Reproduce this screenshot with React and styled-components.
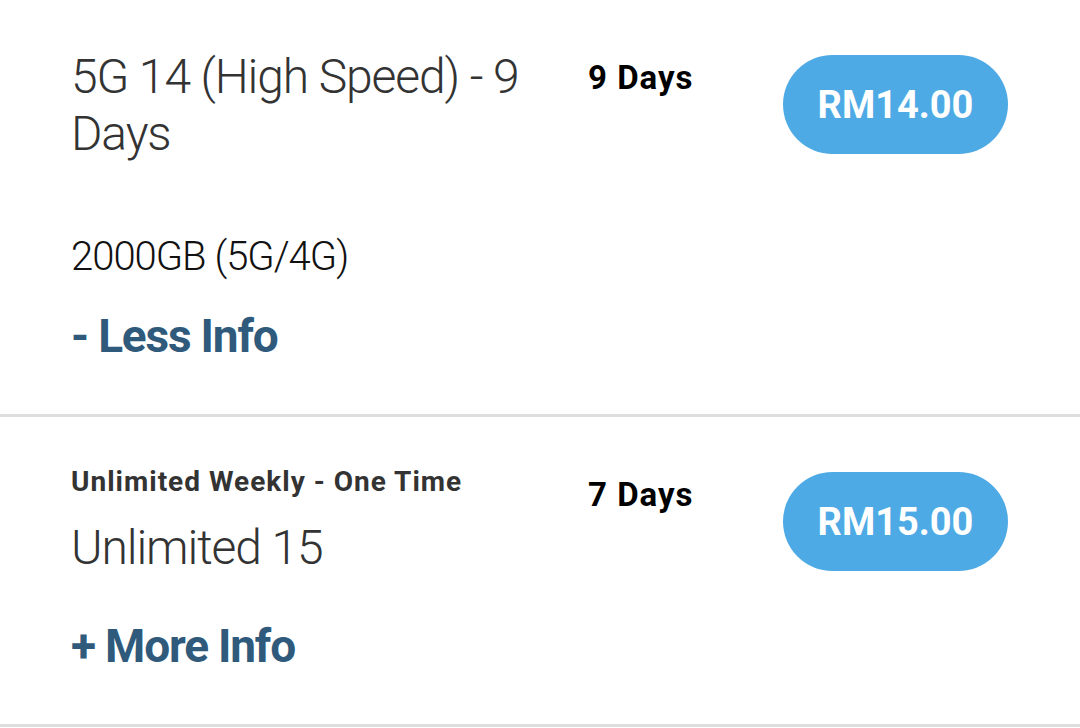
import styled, { createGlobalStyle } from "styled-components";

const plans = [
  {
    id: 1,
    title: "5G 14 (High Speed) - 9 Days",
    days: "9 Days",
    price: "RM14.00",
    details: "2000GB (5G/4G)",
    open: true,
  },
  {
    id: 2,
    tag: "Unlimited Weekly - One Time",
    title: "Unlimited 15",
    days: "7 Days",
    price: "RM15.00",
    open: false,
  },
];

export default function App() {
  return (
    <>
      <GlobalStyle />
      <List>
        {plans.map((plan) => (
          <Plan key={plan.id}>
            <Info>
              {plan.tag && <Tag>{plan.tag}</Tag>}
              <Title>{plan.title}</Title>
              {plan.open && <Details>{plan.details}</Details>}
              <Toggle $open={plan.open}>
                {plan.open ? "- Less Info" : "+ More Info"}
              </Toggle>
            </Info>
            <Duration>{plan.days}</Duration>
            <PriceButton>{plan.price}</PriceButton>
          </Plan>
        ))}
      </List>
    </>
  );
}

const GlobalStyle = createGlobalStyle`
  body {
    margin: 0;
    background: #ffffff;
    font-family: Roboto, "Liberation Sans", sans-serif;
  }
`;

const List = styled.ul`
  margin: 0;
  padding: 0;
  list-style: none;
`;

const Plan = styled.li`
  display: grid;
  grid-template-columns: 489px 167px 225px;
  column-gap: 28px;
  align-items: start;
  padding: 48px 72px 50px 71px;
  border-bottom: 3px solid #dedede;
`;

const Info = styled.div`
  display: flex;
  flex-direction: column;
`;

const Tag = styled.p`
  margin: 0 0 20px;
  font-size: 28px;
  line-height: 34px;
  font-weight: 700;
  letter-spacing: 1px;
  color: #333333;
`;

const Title = styled.h3`
  margin: 0;
  font-size: 48px;
  line-height: 57px;
  font-weight: 300;
  letter-spacing: -1.1px;
  color: #333333;
`;

const Details = styled.p`
  margin: 71px 0 0;
  font-size: 40px;
  line-height: 48px;
  font-weight: 300;
  letter-spacing: -1px;
  color: #111111;
`;

const Toggle = styled.a`
  margin-top: ${(props) => (props.$open ? "27px" : "42px")};
  font-size: 46px;
  line-height: 56px;
  font-weight: 700;
  letter-spacing: -1.2px;
  color: #2f5a7b;
  cursor: pointer;
`;

const Duration = styled.span`
  margin-top: 10px;
  font-size: 33px;
  line-height: 40px;
  font-weight: 700;
  letter-spacing: 1px;
  color: #000000;
`;

const PriceButton = styled.button`
  margin-top: 7px;
  width: 225px;
  height: 99px;
  border: none;
  border-radius: 50px;
  background: #4eaae5;
  color: #ffffff;
  font-family: Roboto, "Liberation Sans", sans-serif;
  font-size: 38px;
  font-weight: 700;
  cursor: pointer;
`;
